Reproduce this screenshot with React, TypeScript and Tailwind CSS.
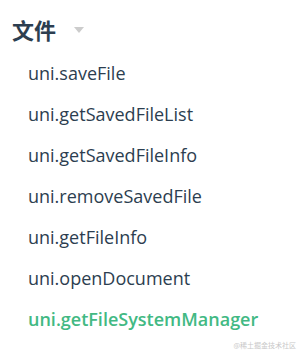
const items = [
  "uni.saveFile",
  "uni.getSavedFileList",
  "uni.getSavedFileInfo",
  "uni.removeSavedFile",
  "uni.getFileInfo",
  "uni.openDocument",
];

export default function App() {
  return (
    <div
      className="relative h-[357px] w-[298px] overflow-hidden bg-white px-3 text-[#2c3e50]"
      style={{ fontFamily: '"Open Sans", "Noto Sans CJK SC", sans-serif' }}
    >
      <div className="mt-[14px] flex h-[30px] items-center">
        <span
          className="text-[22px] font-bold leading-[30px]"
          style={{ fontFamily: '"Noto Sans CJK SC", sans-serif' }}
        >
          文件
        </span>
        <span className="ml-[18px] mt-[2px] h-0 w-0 border-x-[5px] border-t-[6px] border-x-transparent border-t-[#ccc]" />
      </div>

      <ul className="mt-[9px] pl-4">
        {items.map((item) => (
          <li key={item} className="flex h-[41px] items-center text-[18px]">
            {item}
          </li>
        ))}
        <li className="flex h-[41px] items-center text-[18px] font-semibold text-[#42b983]">
          uni.getFileSystemManager
        </li>
      </ul>

      <div
        className="absolute bottom-[7px] right-[2px] text-[7px] text-[#c8c8c8]"
        style={{ fontFamily: '"Noto Sans CJK SC", sans-serif' }}
      >
        @稀土掘金技术社区
      </div>
    </div>
  );
}
